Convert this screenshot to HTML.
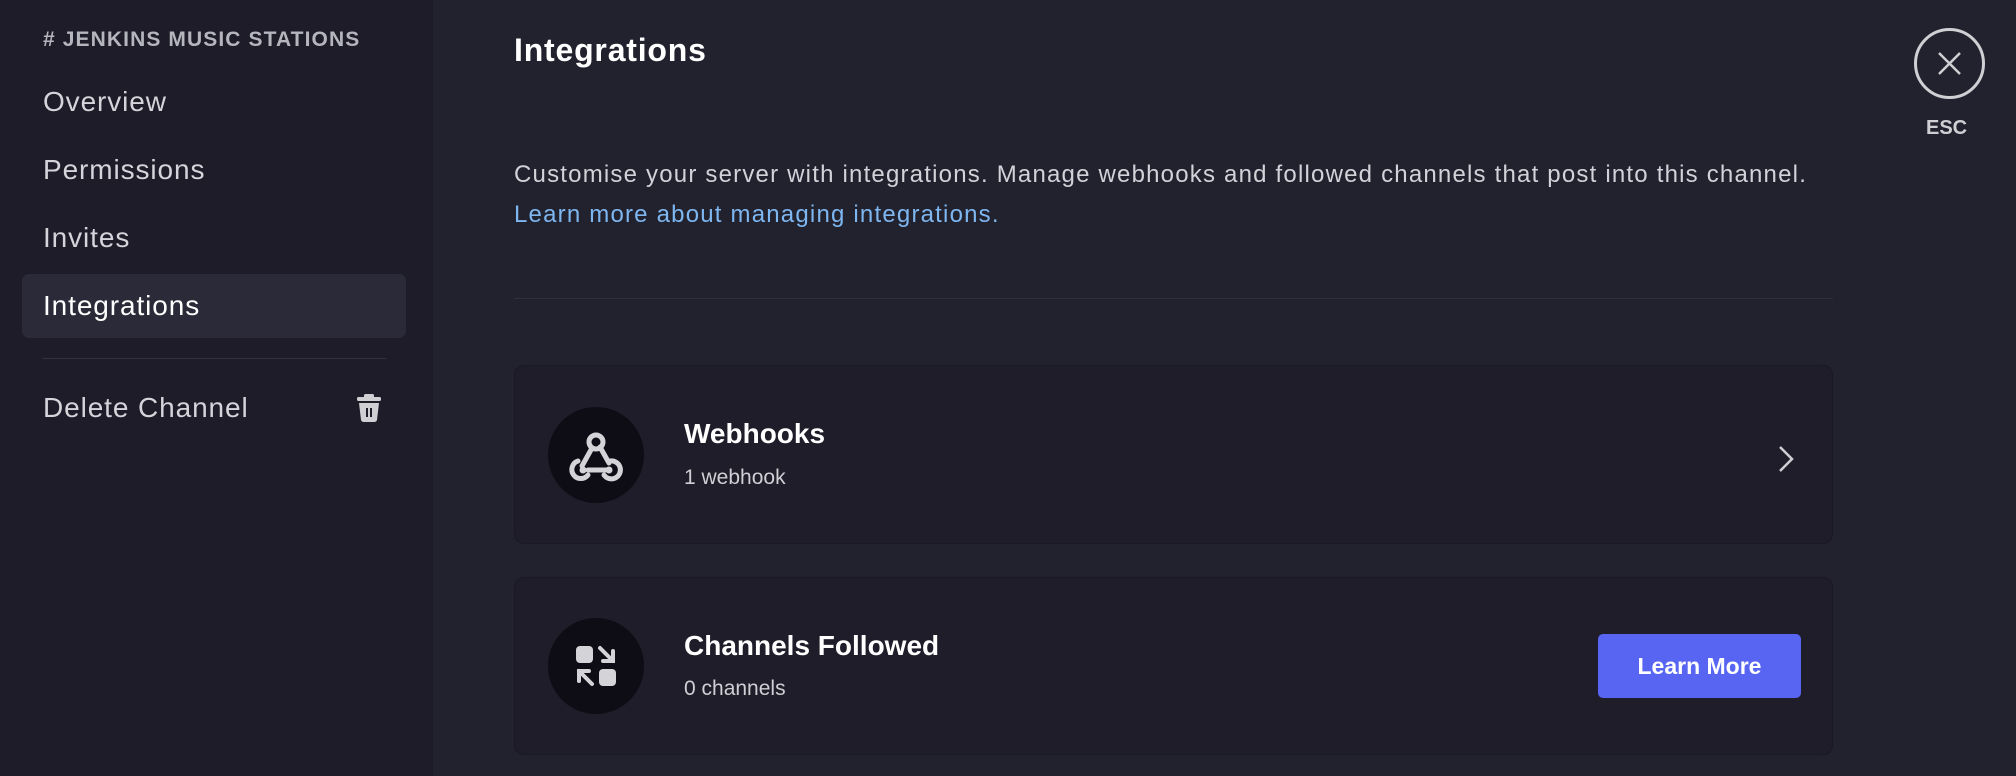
<!DOCTYPE html>
<html><head><meta charset="utf-8"><style>
*{margin:0;padding:0;box-sizing:border-box}
body{width:2016px;height:776px;overflow:hidden;background:#22212e;font-family:"Liberation Sans",sans-serif;position:relative}
.side{position:absolute;left:0;top:0;width:433px;height:776px;background:#1d1c28}
.hdr{position:absolute;left:43px;top:28px;font-size:21px;font-weight:bold;color:#b5b5bd;letter-spacing:1.1px}
.nav{position:absolute;left:43px;font-size:28px;color:#d4d4da;line-height:34px;letter-spacing:0.9px}
.sel{position:absolute;left:22px;top:274px;width:384px;height:64px;background:#2b2a38;border-radius:7px}
.div1{position:absolute;left:42px;top:358px;width:344px;height:1px;background:#33323f}
.t{position:absolute;color:#fff}
.card{position:absolute;left:514px;width:1319px;background:#1e1d29;border:1px solid #191823;border-radius:10px}
.circ{position:absolute;left:33px;width:96px;height:96px;border-radius:50%;background:#0e0d15}
</style></head><body>
<div class="side">
<div class="hdr"># JENKINS MUSIC STATIONS</div>
<div class="sel"></div>
<div class="nav" style="top:85px">Overview</div>
<div class="nav" style="top:153px">Permissions</div>
<div class="nav" style="top:221px">Invites</div>
<div class="nav" style="top:289px;color:#fff">Integrations</div>
<div class="div1"></div>
<div class="nav" style="top:391px">Delete Channel</div>
<svg style="position:absolute;left:356px;top:393px" width="26" height="30" viewBox="0 0 26 30"><rect x="8" y="1" width="10" height="4" rx="1.5" fill="#cfcfd4"/><rect x="1" y="4" width="24" height="4" rx="1.5" fill="#cfcfd4"/><path d="M3 10h20l-2 17a3 3 0 0 1-3 2H8a3 3 0 0 1-3-2z" fill="#cfcfd4"/><rect x="10" y="15" width="2" height="9" fill="#1d1c28"/><rect x="14" y="15" width="2" height="9" fill="#1d1c28"/></svg>
</div>
<div class="t" style="left:514px;top:32px;font-size:32px;font-weight:bold;letter-spacing:0.8px">Integrations</div>
<div class="t" style="left:514px;top:161px;font-size:24px;color:#d2d2d8;letter-spacing:1.2px">Customise your server with integrations. Manage webhooks and followed channels that post into this channel.</div>
<div class="t" style="left:514px;top:201px;font-size:24px;color:#7eb6f0;letter-spacing:1.2px">Learn more about managing integrations.</div>
<div style="position:absolute;left:514px;top:298px;width:1319px;height:1px;background:#302f3c"></div>
<div class="card" style="top:365px;height:179px">
<div class="circ" style="top:41px"><svg width="96" height="96" viewBox="0 0 96 96"><g fill="none" stroke="#d4d4d8" stroke-width="5" stroke-linecap="round"><circle cx="48" cy="35" r="7"/><path d="M44 41l-10 18"/><path d="M30 54a9 9 0 1 0 10 14"/><path d="M40 63h21"/><path d="M62 54a9 9 0 1 1 -6 14"/><path d="M52 40l9 16"/></g><circle cx="61" cy="63" r="3.5" fill="#d4d4d8"/><circle cx="35" cy="63" r="3.5" fill="#d4d4d8"/></svg></div>
<div class="t" style="left:169px;top:52px;font-size:28px;font-weight:bold">Webhooks</div>
<div class="t" style="left:169px;top:100px;font-size:21px;color:#cfcfd5">1 webhook</div>
<svg style="position:absolute;left:1261px;top:78px" width="20" height="30" viewBox="0 0 20 30"><path d="M4 3l12 12L4 27" fill="none" stroke="#cfcfd5" stroke-width="2.5"/></svg>
</div>
<div class="card" style="top:577px;height:178px">
<div class="circ" style="top:40px"><svg width="96" height="96" viewBox="0 0 96 96"><rect x="28" y="28" width="17" height="17" rx="4" fill="#d4d4d8"/><rect x="51" y="51" width="17" height="17" rx="4" fill="#d4d4d8"/><g stroke="#d4d4d8" stroke-width="4" fill="none" stroke-linecap="round"><path d="M52 30l13 13M55 43h10V33"/><path d="M44 66L31 53M41 53H31v10"/></g></svg></div>
<div class="t" style="left:169px;top:52px;font-size:28px;font-weight:bold">Channels Followed</div>
<div class="t" style="left:169px;top:99px;font-size:21px;color:#cfcfd5">0 channels</div>
<div style="position:absolute;left:1083px;top:56px;width:203px;height:64px;background:#5865f2;border-radius:5px;color:#fff;font-size:23px;font-weight:bold;text-align:center;line-height:64px">Learn More</div>
</div>
<div style="position:absolute;left:1914px;top:28px;width:71px;height:71px;border:3px solid #cfcfd4;border-radius:50%"></div>
<svg style="position:absolute;left:1937px;top:51px" width="25" height="25" viewBox="0 0 25 25"><path d="M2 2l21 21M23 2L2 23" stroke="#cfcfd4" stroke-width="2.5"/></svg>
<div class="t" style="left:1926px;top:117px;font-size:20px;font-weight:bold;color:#cfcfd4">ESC</div>
</body></html>
